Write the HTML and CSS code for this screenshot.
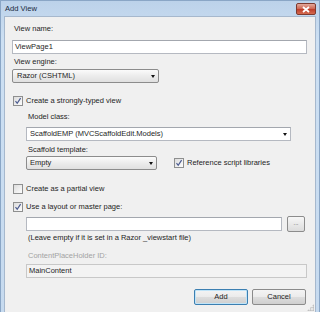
FILE: index.html
```html
<html>
<head>
<meta name="viewport" content="width=device-width, initial-scale=1.0">
<link rel="stylesheet" href="styles.css">
</head>
<body>
<div class="win">
<div class="titlebar">
<span class="title">Add View</span>
<div class="close"><svg width="8" height="7" viewBox="0 0 8 7"><path d="M1 1L7 6M7 1L1 6" stroke="#fff" stroke-width="1.8"/></svg></div>
</div>
<div class="client">
<div class="lbl">View name:</div>
<div class="txt full">ViewPage1</div>
<div class="lbl gap3">View engine:</div>
<div class="combo engine">Razor (CSHTML)<span class="arrow"></span></div>

<div class="chk gap13"><span class="box"><svg width="8" height="8" viewBox="0 0 8 8"><path d="M1.5 4.2L3.2 6.3L6.6 1.2" fill="none" stroke="#4a5a8f" stroke-width="1.2"/></svg></span>Create a strongly-typed view</div>
<div class="sub">
<div class="lbl gap6">Model class:</div>
<div class="txt model">ScaffoldEMP (MVCScaffoldEdit.Models)<span class="arrow"></span></div>
<div class="lbl gap4">Scaffold template:</div>
<div class="row tpl">
<div class="combo scaffold">Empty<span class="arrow"></span></div>
<div class="chk"><span class="box"><svg width="8" height="8" viewBox="0 0 8 8"><path d="M1.5 4.2L3.2 6.3L6.6 1.2" fill="none" stroke="#4a5a8f" stroke-width="1.2"/></svg></span>Reference script libraries</div>
</div>
</div>

<div class="chk gap14"><span class="box"></span>Create as a partial view</div>
<div class="chk gap8"><span class="box"><svg width="8" height="8" viewBox="0 0 8 8"><path d="M1.5 4.2L3.2 6.3L6.6 1.2" fill="none" stroke="#4a5a8f" stroke-width="1.2"/></svg></span>Use a layout or master page:</div>
<div class="sub">
<div class="row layout">
<div class="txt lay"></div>
<div class="dots">...</div>
</div>
<div class="lbl hint">(Leave empty if it is set in a Razor _viewstart file)</div>
<div class="lbl off gap8">ContentPlaceHolder ID:</div>
<div class="txt cph">MainContent</div>
</div>

<div class="btns">
<div class="btn def">Add</div>
<div class="btn">Cancel</div>
</div>
<div class="grip"></div>
</div>
</div>
</body>
</html>
```
FILE: styles.css
```css
*{
margin:0;
padding:0;
box-sizing:border-box;
}
body{
width:320px;
height:312px;
overflow:hidden;
font-family:"Liberation Sans",Arial,sans-serif;
font-size:7.5px;
color:#1e1e1e;
}
.win{
width:320px;
height:312px;
background:linear-gradient(#bcd2ea,#cde0f3 40px,#c6daef);
border:1px solid #8aa6c6;
border-bottom:none;
display:flex;
flex-direction:column;
}
.titlebar{
height:15px;
display:flex;
align-items:center;
justify-content:space-between;
padding:0 3px 0 4px;
}
.title{
color:#1a2a40;
font-size:7.6px;
}
.close{
width:20px;
height:12px;
margin-top:1px;
border:1px solid #7e3a2f;
border-radius:2px;
background:linear-gradient(#e3a99c,#cf6a57 45%,#bf3f2c 55%,#d46a4f);
display:flex;
align-items:center;
justify-content:center;
}
.client{
position:relative;
flex:1;
margin:0 3px;
background:#f0f0f0;
border:1px solid #a6b8cd;
border-bottom:none;
padding:7px 10px 0 7px;
}
.lbl{
height:10px;
line-height:10px;
padding-left:2px;
white-space:nowrap;
}
.gap3{margin-top:3px;}
.gap4{margin-top:4px;}
.gap6{margin-top:6px;}
.gap8{margin-top:8px;}
.gap13{margin-top:13px;}
.gap14{margin-top:14px;}
.txt{
position:relative;
height:14px;
line-height:12px;
background:#fff;
border:1px solid #b5b9c1;
border-top-color:#a3a7ae;
padding-left:2px;
white-space:nowrap;
}
.full{
margin-top:6px;
width:295px;
}
.combo{
position:relative;
height:14px;
line-height:12px;
padding-left:4px;
border:1px solid #8c8c8c;
border-radius:2px;
background:linear-gradient(#fbfbfb,#ececec 50%,#e0e0e0);
white-space:nowrap;
}
.engine{
margin-top:2px;
width:147px;
}
.arrow{
position:absolute;
right:3px;
top:5px;
border-left:2.5px solid transparent;
border-right:2.5px solid transparent;
border-top:3px solid #111;
}
.chk{
height:10px;
line-height:10px;
display:flex;
align-items:center;
padding-left:1px;
white-space:nowrap;
}
.box{
width:10px;
height:10px;
margin-right:3px;
border:1px solid #8e8f8f;
background:linear-gradient(135deg,#dcdcdc,#fdfdfd);
display:flex;
align-items:center;
justify-content:center;
}
.sub{
padding-left:14px;
}
.model{
margin-top:5px;
width:265px;
padding-left:3px;
}
.tpl{
margin-top:1px;
height:14px;
display:flex;
align-items:center;
}
.scaffold{
width:131px;
padding-left:3px;
}
.tpl .chk{
margin-left:16px;
}
.layout{
margin-top:4px;
height:16px;
display:flex;
align-items:center;
}
.lay{
width:256px;
}
.dots{
margin-left:5px;
width:18px;
height:16px;
line-height:12px;
text-align:center;
font-size:6px;
border:1px solid #8c8c8c;
border-radius:2px;
background:linear-gradient(#f7f7f7,#e9e9e9 50%,#dcdcdc);
color:#444;
}
.hint{
margin-top:1px;
}
.off{
color:#a3a3a3;
}
.cph{
margin-top:3px;
width:281px;
background:#f3f3f3;
border-color:#c8c8c8;
padding-left:2px;
}
.btns{
margin-top:11px;
margin-right:-1px;
display:flex;
justify-content:flex-end;
gap:4px;
}
.btn{
width:54px;
height:16px;
line-height:14px;
text-align:center;
border:1px solid #8b8b8b;
border-radius:2px;
background:linear-gradient(#f4f4f4,#ebebeb 50%,#dddddd 51%,#cfcfcf);
}
.def{
border-color:#3c7fb1;
box-shadow:inset 0 0 0 1px #c0e4f8;
}
.grip{
position:absolute;
right:1px;
bottom:1px;
width:7px;
height:7px;
background:radial-gradient(circle,#b8b8b8 0.8px,transparent 1px) 0 0/2.5px 2.5px;
clip-path:polygon(100% 0,100% 100%,0 100%);
}
```
